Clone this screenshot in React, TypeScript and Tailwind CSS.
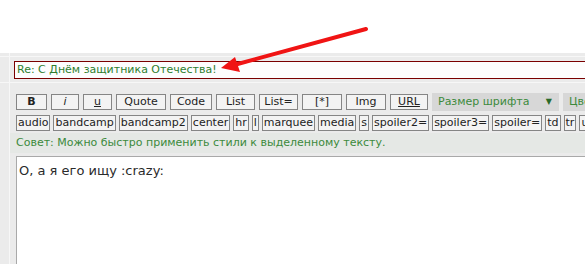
import React from 'react';

const MAIN_BUTTONS = [
  { label: 'B', w: 'w-[31px]', cls: 'font-bold' },
  { label: 'i', w: 'w-[28px]', cls: 'italic' },
  { label: 'u', w: 'w-[29px]', cls: 'underline' },
  { label: 'Quote', w: 'w-[50px]', cls: '' },
  { label: 'Code', w: 'w-[42px]', cls: '' },
  { label: 'List', w: 'w-[39px]', cls: '' },
  { label: 'List=', w: 'w-[39px]', cls: '' },
  { label: '[*]', w: 'w-[40px]', cls: '' },
  { label: 'Img', w: 'w-[40px]', cls: '' },
  { label: 'URL', w: 'w-[38px]', cls: 'underline' },
];

const TAGS = [
  'audio', 'bandcamp', 'bandcamp2', 'center', 'hr', 'l', 'marquee', 'media', 's',
  'spoiler2=', 'spoiler3=', 'spoiler=', 'td', 'tr', 'u',
];

export default function App() {
  return (
    <div className="relative w-[585px] h-[264px] overflow-hidden bg-white font-['DejaVu_Sans',Verdana,sans-serif]">
      {/* blank top */}
      <div className="h-[53px] bg-white" />

      <div className="flex h-[211px] bg-[#ebebeb]">
        {/* left narrow column */}
        <div className="w-[10px] shrink-0 border-r border-[#f7f7f7] flex flex-col">
          <div className="h-[4px] border-b border-[#f7f7f7]" />
          <div className="h-[26px] border-b border-[#f7f7f7]" />
        </div>

        <div className="flex-1 min-w-0 flex flex-col">
          <div className="h-[4px] border-b border-[#f7f7f7]" />

          {/* subject row */}
          <div className="h-[26px] border-b border-[#f7f7f7] pl-[4px] pt-[4px]">
            <div className="h-[18px] w-[620px] border border-[#7a0000] bg-[#fdfdfd] pl-[2px] text-[11px] leading-[16px] text-[#2f7d2f] whitespace-nowrap">
              Re: С Днём защитника Отечества!
            </div>
          </div>

          {/* editor */}
          <div className="flex-1 pl-[6px] pt-[10px] flex flex-col">
            <div className="flex items-center gap-[4px] whitespace-nowrap">
              {MAIN_BUTTONS.map((b) => (
                <div
                  key={b.label}
                  className={`${b.w} h-[16px] shrink-0 border border-[#858585] bg-[#f3f3f3] text-center text-[11px] leading-[14px] text-[#222] ${b.cls}`}
                >
                  {b.label}
                </div>
              ))}
              <div className="w-[127px] h-[18px] shrink-0 flex items-center justify-between bg-[#d7d7d7] pl-[6px] pr-[7px] text-[11px] text-[#3c8a3c]">
                <span>Размер шрифта</span>
                <span className="text-[8px] text-[#2a6a2a]">▼</span>
              </div>
              <div className="w-[60px] h-[18px] shrink-0 flex items-center bg-[#d7d7d7] pl-[6px] text-[11px] text-[#3c8a3c]">
                Цвет шрифта
              </div>
            </div>

            <div className="flex items-center gap-[3px] mt-[4px] whitespace-nowrap">
              {TAGS.map((t) => (
                <div
                  key={t}
                  className="h-[16px] shrink-0 border border-[#858585] bg-[#f3f3f3] px-px text-[11px] leading-[14px] text-[#222]"
                >
                  {t}
                </div>
              ))}
            </div>

            <div className="mt-[2px] h-[20px] -ml-[6px] pl-[6px] bg-[#e5e8e5] text-[11px] leading-[20px] text-[#3c8a3c] whitespace-nowrap">
              Совет: Можно быстро применить стили к выделенному тексту.
            </div>

            <div className="mt-[3px] flex-1 border-l border-t border-[#a9a9a9] bg-white pl-[2px] pt-[6px] text-[13px] leading-[16px] text-[#2b2b2b]">
              О, а я его ищу :crazy:
            </div>
          </div>
        </div>
      </div>

      {/* red arrow annotation */}
      <svg className="absolute left-0 top-0 pointer-events-none" width="585" height="264" viewBox="0 0 585 264">
        <line x1="366" y1="29" x2="234" y2="65" stroke="#f01414" strokeWidth="4" strokeLinecap="round" />
        <polygon points="221,68 240,72 235,57" fill="#f01414" />
      </svg>
    </div>
  );
}
